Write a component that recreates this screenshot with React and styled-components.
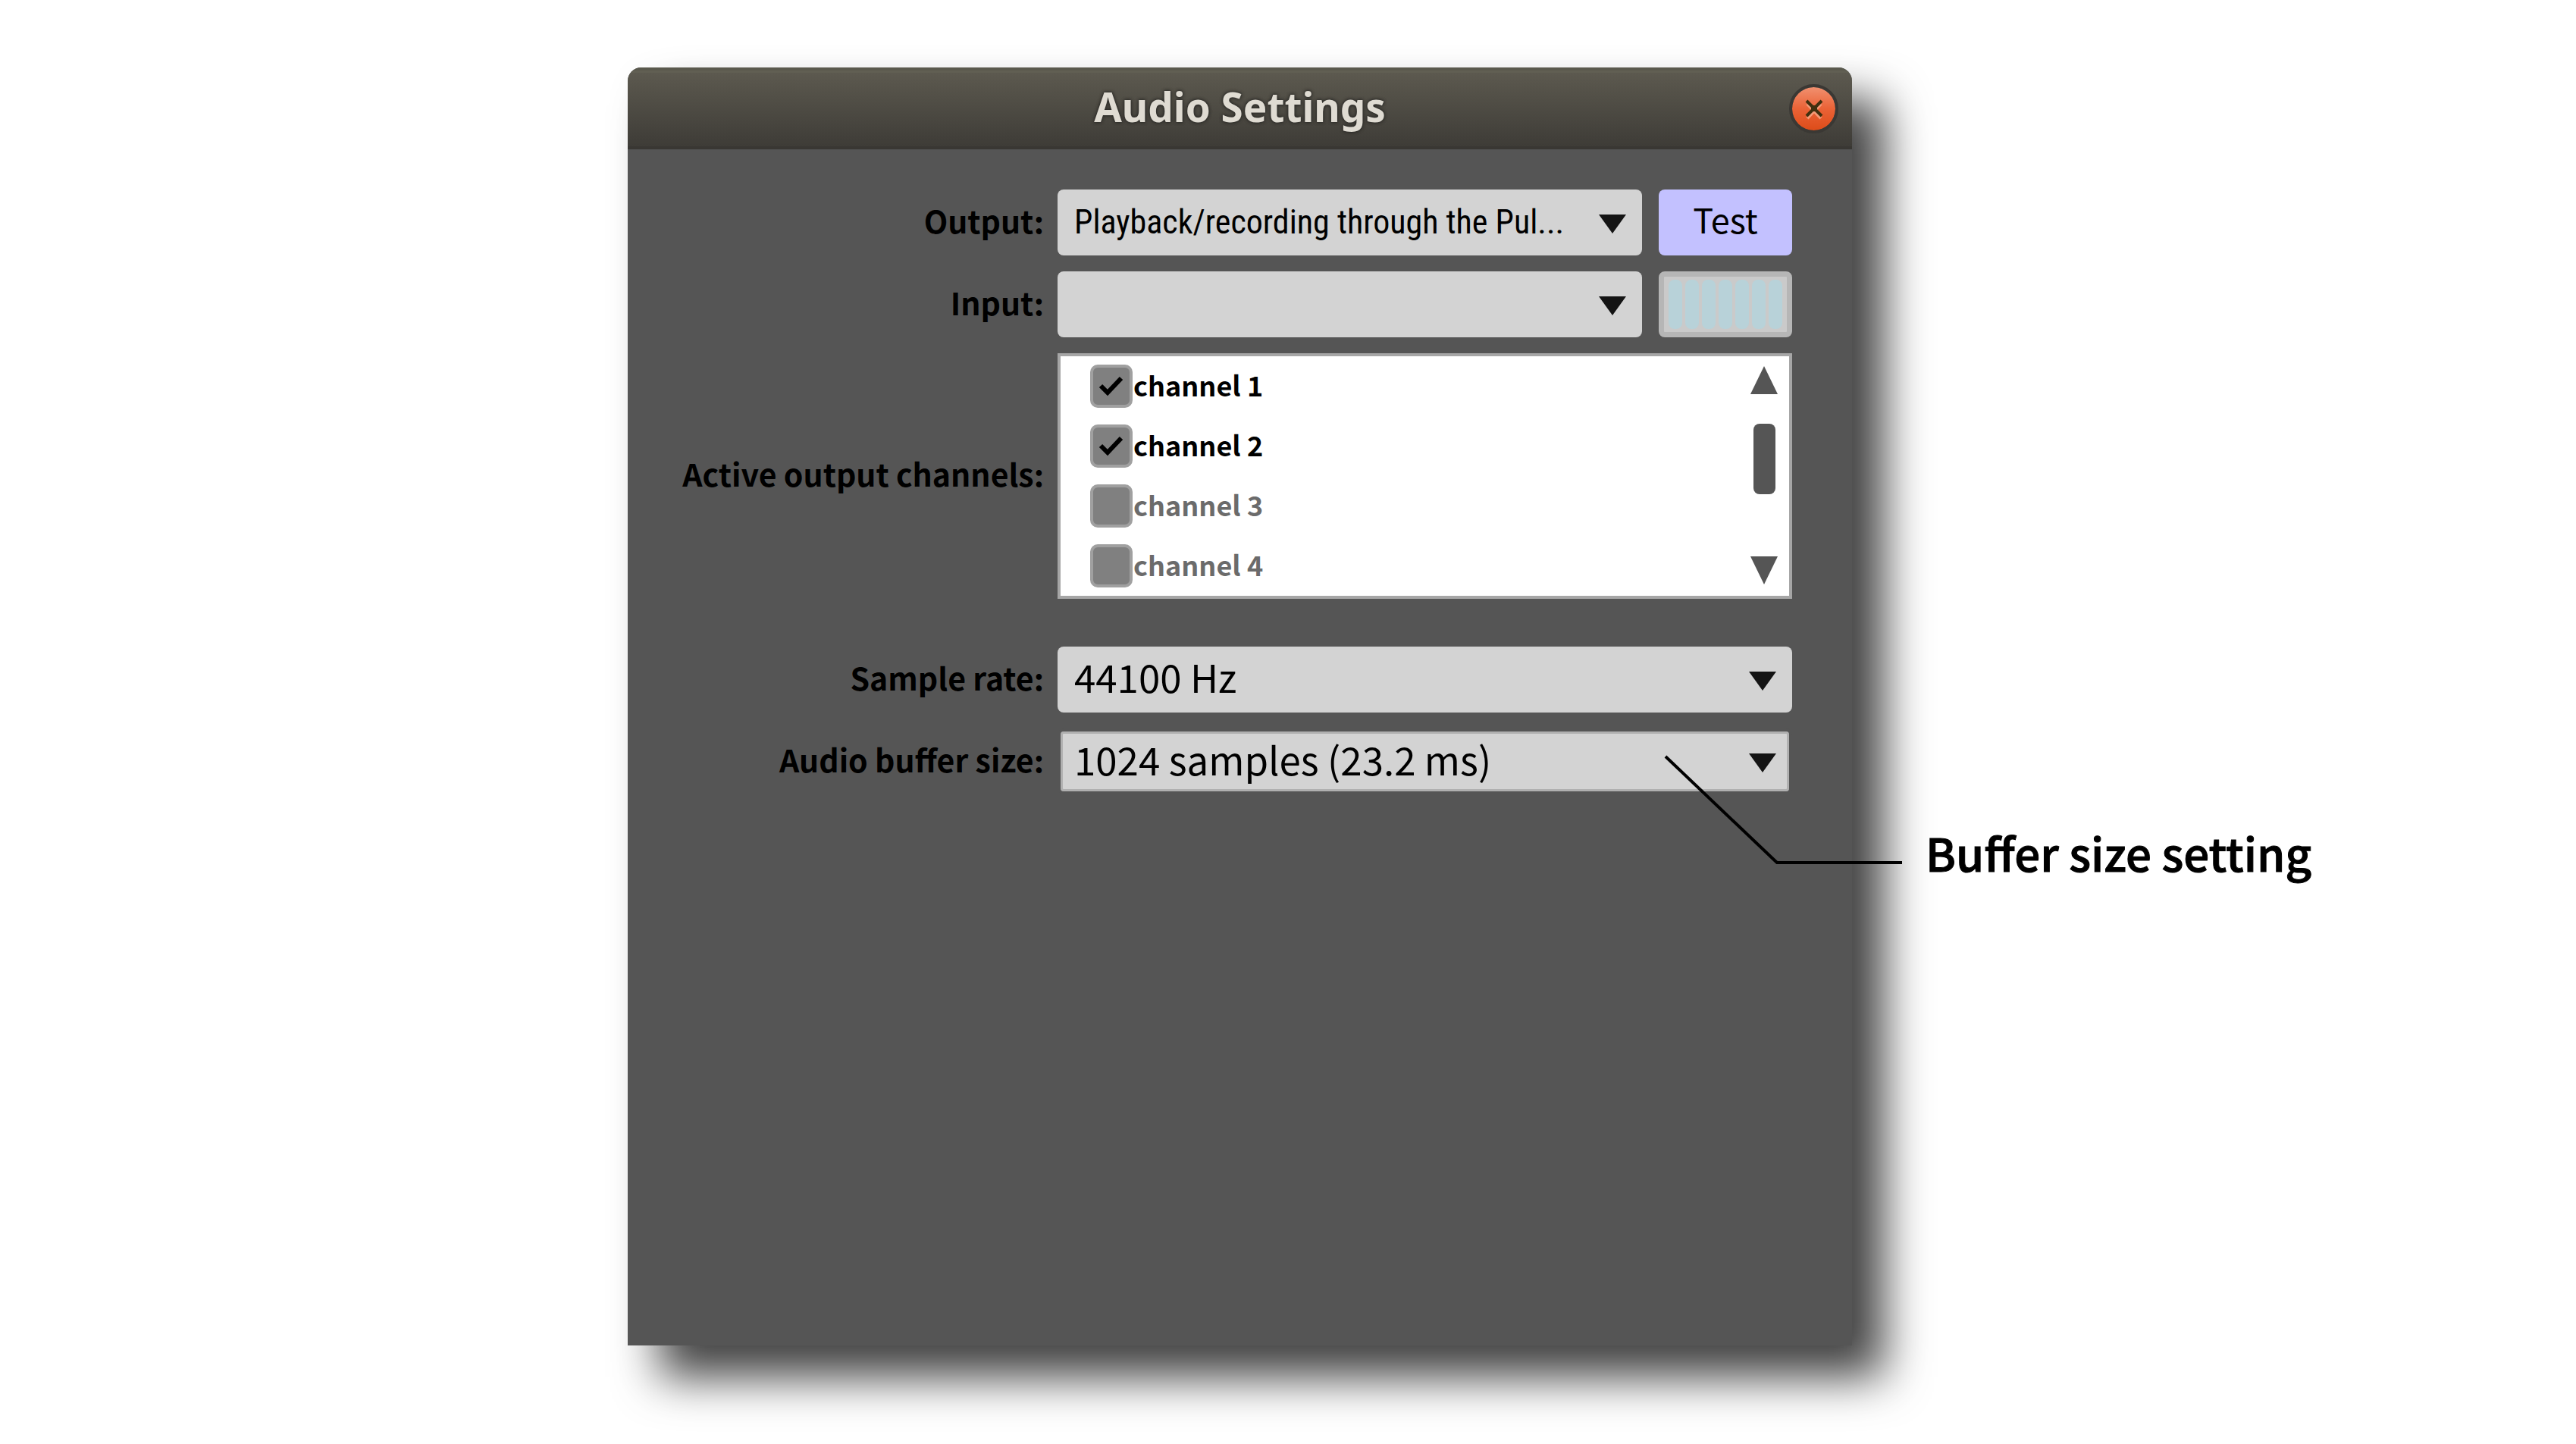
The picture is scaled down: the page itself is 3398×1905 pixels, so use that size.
import React, { useState } from 'react';
import styled, { createGlobalStyle } from 'styled-components';

const uiFont = '"Noto Sans CJK SC", "Noto Sans", sans-serif';

const GlobalStyle = createGlobalStyle`
  *, *::before, *::after { box-sizing: border-box; }
  body { margin: 0; background: #fff; overflow-x: hidden; }
  button, select, input { font: inherit; color: inherit; margin: 0; }
`;

const Page = styled.main`
  display: grid;
  grid-template-columns: 828fr 1615fr 955fr;
  min-height: 100vh;
  padding: 89px 0 130px;
  color: #000;
  font-family: ${uiFont};
`;

const Window = styled.section`
  grid-column: 2;
  position: relative;
  display: flex;
  flex-direction: column;
  background: #555;
  border-radius: 18px 18px 0 0;
  box-shadow: 42px 42px 60px rgba(0, 0, 0, 0.74);
`;

const TitleBar = styled.header`
  display: grid;
  grid-template-columns: 1fr auto 1fr;
  align-items: center;
  height: 108px;
  padding: 0 18px;
  border-radius: 18px 18px 0 0;
  background: linear-gradient(#5a594d 0, #5a594d 4px, #615f53 4px, #615f53 7px, #5c594f 7px, #3e3c37 104px, #393733 104px);
`;

const Title = styled.h1`
  grid-column: 2;
  margin: 0;
  padding-bottom: 4px;
  font: 700 53px/72px "Noto Sans", sans-serif;
  color: #dfdbd2;
  text-shadow: 0 0 4px #2b2a27, 0 0 4px #2b2a27;
`;

const CloseButton = styled.button`
  justify-self: end;
  display: grid;
  place-items: center;
  width: 65px;
  height: 65px;
  padding: 0;
  border: 4px solid #3a3834;
  border-radius: 50%;
  background: linear-gradient(#f1906f, #ea6236 50%, #dd4c19);
  background-clip: padding-box;
`;

const Form = styled.form`
  display: flex;
  flex-direction: column;
  gap: 21px;
  padding: 53px 79px 53px 0;
`;

const Row = styled.div`
  display: grid;
  grid-template-columns: 549px minmax(0, 1fr);
  column-gap: 18px;
  align-items: center;
  margin-bottom: ${(p) => (p.$spaced ? '42px' : '0')};
`;

const Caption = styled.label`
  padding-bottom: 8px;
  font-size: 41px;
  line-height: 60px;
  font-weight: 700;
  text-align: right;
  white-space: nowrap;
`;

const Fields = styled.div`
  display: grid;
  grid-template-columns: minmax(0, 1fr) 176px;
  column-gap: 22px;
`;

const SelectBox = styled.div`
  position: relative;
  display: grid;

  svg {
    position: absolute;
    right: 21px;
    top: calc(50% - 11px);
    pointer-events: none;
  }
`;

const Select = styled.select`
  appearance: none;
  width: 100%;
  height: 87px;
  padding: 0 60px 10px 22px;
  border: 0;
  border-radius: 8px;
  outline: none;
  background: #d3d3d3;
  font-family: ${uiFont};
  font-size: 51px;
  line-height: 72px;
`;

const NarrowSelect = styled(Select)`
  padding-bottom: 2px;
  font-family: "Roboto Condensed", "Open Sans", sans-serif;
  font-size: 44px;
`;

const FocusedSelect = styled(Select)`
  padding: 0 56px 10px 18px;
  border: 4px solid #555;
  box-shadow: inset 0 0 0 3px #b0b0b0;
`;

const TestButton = styled.button`
  height: 87px;
  padding: 0 0 10px;
  border: 0;
  border-radius: 8px;
  background: #c3c1ff;
  font-size: 45px;
  line-height: 60px;
`;

const Meter = styled.div`
  display: flex;
  gap: 4px;
  height: 87px;
  padding: 4px 6px;
  border: 7px solid #b6b6b6;
  border-radius: 8px;
  background: #cacaca;
`;

const MeterBar = styled.span`
  flex: 1;
  border-radius: 8px;
  background: #b8d2d9;
`;

const ChannelBox = styled.div`
  display: flex;
  justify-content: space-between;
  border: 4px solid #a6a6a6;
  background: #fff;
`;

const ChannelList = styled.ul`
  flex: 1;
  margin: 0;
  padding: 0 0 0 39px;
  list-style: none;
`;

const ChannelRow = styled.li`
  display: flex;
  align-items: center;
  gap: 1px;
  height: 79px;
`;

const Tick = styled.span`
  position: relative;
  display: grid;

  svg {
    position: absolute;
    inset: 0;
    pointer-events: none;
  }
`;

const Checkbox = styled.input`
  appearance: none;
  width: 56px;
  height: 57px;
  border: 4px solid #a0a0a0;
  border-radius: 10px;
  background: #808080;
`;

const ChannelName = styled.label`
  padding-bottom: 6px;
  font-size: 36px;
  line-height: 54px;
  font-weight: 700;
  color: ${(p) => (p.$on ? '#000' : '#6b6b6b')};
`;

const ScrollBar = styled.div`
  display: flex;
  flex-direction: column;
  align-items: center;
  width: 66px;
  padding: 13px 0 15px;
`;

const ScrollButton = styled.button`
  display: grid;
  padding: 0;
  border: 0;
  background: none;
`;

const ScrollTrack = styled.div`
  flex: 1;
  padding-top: 39px;
`;

const ScrollThumb = styled.div`
  width: 29px;
  height: 93px;
  border-radius: 8px;
  background: #555;
`;

const Callout = styled.aside`
  position: absolute;
  left: calc(100% - 248px);
  top: 907px;
  display: flex;
  align-items: flex-end;
  gap: 31px;
  pointer-events: none;
`;

const CalloutText = styled.p`
  margin: 0;
  font-size: 60px;
  line-height: 60px;
  font-weight: 500;
  -webkit-text-stroke: 1px #000;
  white-space: nowrap;
`;

const DropArrow = () => (
  <svg width="36" height="25" viewBox="0 0 36 25" aria-hidden="true">
    <path d="M0 0H36L18 25Z" fill="#141414" />
  </svg>
);

const ScrollArrow = ({ down }) => (
  <svg width="36" height="37" viewBox="0 0 36 37" aria-hidden="true">
    <path d={down ? 'M0 0H36L18 37Z' : 'M0 37H36L18 0Z'} fill="#555" />
  </svg>
);

function Channel({ number, initial }) {
  const [on, setOn] = useState(initial);
  const id = `channel-${number}`;
  return (
    <ChannelRow>
      <Tick>
        <Checkbox type="checkbox" id={id} checked={on} onChange={() => setOn(!on)} />
        {on && (
          <svg width="56" height="57" viewBox="0 0 56 57" aria-hidden="true">
            <path d="M14 28L23 37L41 18" fill="none" stroke="#000" strokeWidth="6" />
          </svg>
        )}
      </Tick>
      <ChannelName htmlFor={id} $on={on}>
        channel {number}
      </ChannelName>
    </ChannelRow>
  );
}

export default function App() {
  return (
    <>
      <GlobalStyle />
      <Page>
        <Window>
          <TitleBar>
            <Title>Audio Settings</Title>
            <CloseButton type="button" aria-label="Close">
              <svg width="30" height="30" viewBox="0 0 30 30" fill="none" aria-hidden="true">
                <path d="M6 9L24 28M24 9L6 28" stroke="#f59b78" strokeWidth="4" />
                <path d="M5 5L25 25M25 5L5 25" stroke="#40300f" strokeWidth="4" />
                <path d="M11 11H19V19H11Z" fill="#40300f" />
              </svg>
            </CloseButton>
          </TitleBar>

          <Form>
            <Row>
              <Caption htmlFor="output">Output:</Caption>
              <Fields>
                <SelectBox>
                  <NarrowSelect id="output">
                    <option>Playback/recording through the Pul...</option>
                  </NarrowSelect>
                  <DropArrow />
                </SelectBox>
                <TestButton type="button">Test</TestButton>
              </Fields>
            </Row>

            <Row>
              <Caption htmlFor="input">Input:</Caption>
              <Fields>
                <SelectBox>
                  <Select id="input">
                    <option></option>
                  </Select>
                  <DropArrow />
                </SelectBox>
                <Meter role="meter" aria-label="Input level" aria-valuenow={0}>
                  {Array.from({ length: 7 }, (_, i) => (
                    <MeterBar key={i} />
                  ))}
                </Meter>
              </Fields>
            </Row>

            <Row $spaced>
              <Caption as="span" id="channels">Active output channels:</Caption>
              <ChannelBox role="group" aria-labelledby="channels">
                <ChannelList>
                  <Channel number={1} initial />
                  <Channel number={2} initial />
                  <Channel number={3} initial={false} />
                  <Channel number={4} initial={false} />
                </ChannelList>
                <ScrollBar>
                  <ScrollButton type="button" aria-label="Scroll up">
                    <ScrollArrow />
                  </ScrollButton>
                  <ScrollTrack>
                    <ScrollThumb />
                  </ScrollTrack>
                  <ScrollButton type="button" aria-label="Scroll down">
                    <ScrollArrow down />
                  </ScrollButton>
                </ScrollBar>
              </ChannelBox>
            </Row>

            <Row>
              <Caption htmlFor="rate">Sample rate:</Caption>
              <SelectBox>
                <Select id="rate">
                  <option>44100 Hz</option>
                </Select>
                <DropArrow />
              </SelectBox>
            </Row>

            <Row>
              <Caption htmlFor="buffer">Audio buffer size:</Caption>
              <SelectBox>
                <FocusedSelect id="buffer">
                  <option>1024 samples (23.2 ms)</option>
                </FocusedSelect>
                <DropArrow />
              </SelectBox>
            </Row>
          </Form>

          <Callout>
            <svg width="314" height="158" viewBox="0 0 314 158" aria-hidden="true">
              <path d="M2 2L149 142H314" fill="none" stroke="#000" strokeWidth="4" />
            </svg>
            <CalloutText>Buffer size setting</CalloutText>
          </Callout>
        </Window>
      </Page>
    </>
  );
}
